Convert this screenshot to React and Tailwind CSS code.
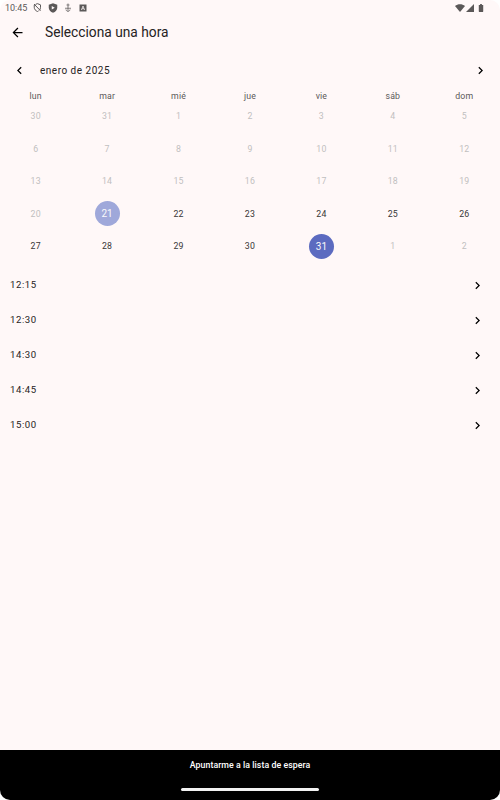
import React, { useState } from "react";
import { MdArrowBack, MdChevronLeft, MdChevronRight } from "react-icons/md";

const WEEKDAYS = ["lun", "mar", "mié", "jue", "vie", "sáb", "dom"];

const WEEKS = [
  [30, 31, 1, 2, 3, 4, 5],
  [6, 7, 8, 9, 10, 11, 12],
  [13, 14, 15, 16, 17, 18, 19],
  [20, 21, 22, 23, 24, 25, 26],
  [27, 28, 29, 30, 31, 1, 2],
];

const HOURS = ["12:15", "12:30", "14:30", "14:45", "15:00"];

// Position in the grid of the current day and of the last day of the month
const TODAY = 22;
const LAST_DAY = 32;

const StatusBar = () => (
  <div className="flex h-[15px] items-center justify-between pl-[5px] pr-[16px] text-[#5b5858]">
    <div className="flex items-center">
      <span className="w-[28px] pt-px text-[9px] leading-[14px]">10:45</span>
      {/* Shield crossed out */}
      <svg className="size-[9px]" viewBox="0 0 18 18" fill="none" stroke="currentColor" strokeWidth="2">
        <path d="M5 2.8 9 1.3l6 2.4v4.800c0 2.400-.8 4.500-2 6M11.200 15.700 9 17c-4-1.600-6.500-4.500-6.500-8.500V4M2 2l13 13.500" />
      </svg>
      {/* Shield with play mark */}
      <svg className="ml-[6px] size-[10px]" viewBox="0 0 20 20">
        <path fill="currentColor" d="M10 .5 18.500 3.500v5.500c0 5-3.500 8.700-8.500 10.500C5 17.700 1.500 14 1.500 9V3.500z" />
        <path fill="#fff8f8" d="m7.500 6 6 3.500-6 3.500z" />
      </svg>
      {/* Debug plug */}
      <svg className="ml-[5px] size-[10px]" viewBox="0 0 20 20" fill="none" stroke="currentColor" strokeWidth="1.500">
        <circle cx="10" cy="4" r="2" />
        <path d="M10 6.500v10M4 10.500h12M6 13c.5 2.500 2 3.500 4 4 2-.5 3.500-1.500 4-4" />
      </svg>
      <svg className="ml-[6px] size-[8px]" viewBox="0 0 16 16">
        <path fill="currentColor" d="M1 1h14v14H1z" />
        <path fill="none" stroke="#fff8f8" strokeWidth="1.500" d="m4.800 12 3.200-8 3.200 8M6 9.500h4" />
      </svg>
    </div>
    <div className="flex items-center">
      <svg className="h-[8px] w-[10px]" viewBox="0 0 20 16">
        <path fill="currentColor" d="M0 4C5.500-.5 14.500-.5 20 4L10 16z" />
      </svg>
      <svg className="ml-px size-[8px]" viewBox="0 0 16 16">
        <path fill="currentColor" d="M16 0v16H0z" />
      </svg>
      <svg className="ml-[4px] h-[8px] w-[6px]" viewBox="0 0 12 18">
        <path fill="currentColor" d="M4 0h4v2h2.500l.5.500V17l-1 1H2l-1-1V2.500L1.500 2H4z" />
      </svg>
    </div>
  </div>
);

const Day = ({ day, index }) => {
  if (index === TODAY || index === LAST_DAY) {
    return (
      <span
        className={`flex size-[25px] items-center justify-center rounded-full text-[10px] tracking-[0.1px] text-[#fafafa] ${
          index === TODAY ? "bg-[#9fa8da]" : "bg-[#5c6bc0]"
        }`}
      >
        {day}
      </span>
    );
  }

  const isOutside = index < TODAY || index > LAST_DAY;

  return (
    <span className={`pt-px text-[8.75px] tracking-[0.2px] ${isOutside ? "text-[#bfbfbf]" : "text-[#383636]"}`}>
      {day}
    </span>
  );
};

const Calendar = () => (
  <section>
    <div className="flex h-10 items-center px-3">
      <button aria-label="Mes anterior">
        <MdChevronLeft size={15} className="text-black" />
      </button>
      <h2 className="ml-[13px] flex-1 text-[10px] tracking-[0.5px]">enero de 2025</h2>
      <button aria-label="Mes siguiente">
        <MdChevronRight size={15} className="text-black" />
      </button>
    </div>

    <div className="grid h-[10px] grid-cols-7 text-center text-[8.75px] leading-[13px] tracking-[0.15px] text-[#5c5959]">
      {WEEKDAYS.map((name) => (
        <span key={name}>{name}</span>
      ))}
    </div>

    <div className="grid auto-rows-[32.5px] grid-cols-7">
      {WEEKS.flat().map((day, i) => (
        <div key={i} className="flex items-center justify-center">
          <Day day={day} index={i} />
        </div>
      ))}
    </div>
  </section>
);

const App = () => {
  const [selectedHour, setSelectedHour] = useState(null);

  return (
    <div className="h-[800px] w-[500px] overflow-hidden bg-white">
      <div className="flex h-full flex-col overflow-hidden rounded-[10px] bg-[#fff8f8] font-['Roboto',sans-serif] text-[#262323]">
        <StatusBar />

        <header className="flex h-[35px] items-center pl-[10px]">
          <button aria-label="Volver">
            <MdArrowBack size={15} className="text-black" />
          </button>
          <h1 className="ml-5 text-[13.75px]">Selecciona una hora</h1>
        </header>

        <Calendar />

        <ul className="flex-1 pt-[5px]">
          {HOURS.map((hour) => (
            <li key={hour}>
              <button
                onClick={() => setSelectedHour(hour)}
                aria-pressed={selectedHour === hour}
                className="flex h-[35px] w-full items-center justify-between pl-[10px] pr-[15px] text-[9.6px] tracking-[0.55px]"
              >
                {hour}
                <MdChevronRight size={15} className="text-black" />
              </button>
            </li>
          ))}
        </ul>

        <footer className="flex h-[50px] flex-col items-center bg-black text-white">
          <button className="h-[30px] pt-px text-[8.75px] font-medium tracking-[0.06px]">
            Apuntarme a la lista de espera
          </button>
          <div className="mt-2 h-[3px] w-[138px] rounded-full bg-[#f2f2f2]" />
        </footer>
      </div>
    </div>
  );
};

export default App;
